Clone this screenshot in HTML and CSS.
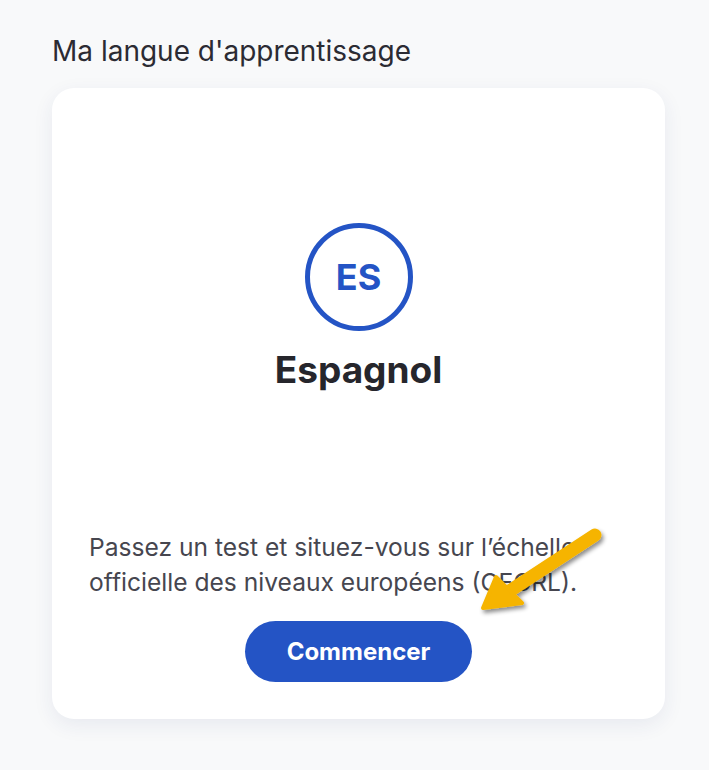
FILE: index.html
```html
<!DOCTYPE html>
<html>

<head>
    <link rel="stylesheet" href="styles.css">
</head>

<body>
    <div class="page">
        <h2 class="section-title">Ma langue d'apprentissage</h2>
        <div class="card">
            <div class="lang">
                <div class="lang-badge">ES</div>
                <div class="lang-name">Espagnol</div>
            </div>
            <p class="card-text">
                Passez un test et situez-vous sur l’échelle
                officielle des niveaux européens (CECRL).
            </p>
            <div class="actions">
                <div class="button">Commencer</div>
            </div>
            <!-- annotation arrow -->
            <svg class="arrow" width="140" height="100" viewBox="0 0 140 100">
                <defs>
                    <filter id="shadow" x="-20%" y="-20%" width="140%" height="140%">
                        <feDropShadow dx="2" dy="3" stdDeviation="2" flood-color="#000" flood-opacity="0.45"/>
                    </filter>
                </defs>
                <g filter="url(#shadow)">
                    <line x1="127" y1="13" x2="40" y2="70" stroke="#f6b400" stroke-width="13" stroke-linecap="round"/>
                    <polygon points="15,86 28,55 54,81" fill="#f6b400" stroke="#f6b400" stroke-width="4" stroke-linejoin="round"/>
                </g>
            </svg>
        </div>
    </div>
</body>

</html>
```

FILE: styles.css
```css
body {
    margin: 0;
    background: #f8f9fa;
    font-family: Inter, "Noto Sans", sans-serif;
    color: #2b2b33;
}

.page {
    padding: 34px 44px 50px 52px;
}

.section-title {
    margin: 0 0 20px 0;
    font-size: 28px;
    font-weight: 400;
    line-height: 34px;
    color: #2b2b33;
}

.card {
    position: relative;
    width: 613px;
    height: 631px;
    box-sizing: border-box;
    padding: 135px 37px 37px 37px;
    background: #ffffff;
    border-radius: 22px;
    box-shadow: 0 6px 20px rgba(40, 50, 110, 0.08);
    display: flex;
    flex-direction: column;
}

.lang {
    display: flex;
    flex-direction: column;
    align-items: center;
    gap: 16px;
}

.lang-badge {
    width: 108px;
    height: 108px;
    box-sizing: border-box;
    border: 5px solid #2454c5;
    border-radius: 50%;
    display: flex;
    align-items: center;
    justify-content: center;
    color: #2454c5;
    font-size: 36px;
    font-weight: 700;
}

.lang-name {
    font-size: 37px;
    font-weight: 700;
    line-height: 46px;
    color: #26262c;
}

.card-text {
    width: 525px;
    margin: auto 0 0 0;
    font-size: 24.6px;
    line-height: 35px;
    color: #46464f;
}

.actions {
    display: flex;
    justify-content: center;
    margin-top: 21px;
}

.button {
    width: 227px;
    height: 61px;
    border-radius: 31px;
    background: #2454c5;
    color: #ffffff;
    font-size: 24px;
    font-weight: 700;
    display: flex;
    align-items: center;
    justify-content: center;
}

.arrow {
    position: absolute;
    left: 416px;
    top: 434px;
}
```
